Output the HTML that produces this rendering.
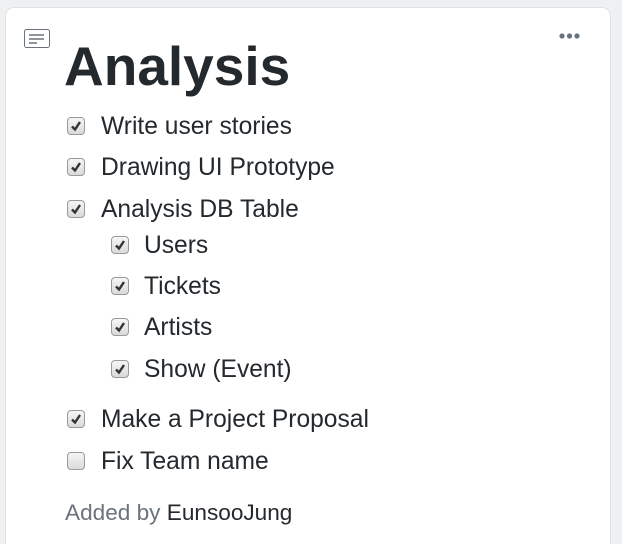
<!DOCTYPE html>
<html><head><style>
html,body{margin:0;width:622px;height:544px;overflow:hidden}
body{background:#eef0f2;font-family:"Liberation Sans",sans-serif;color:#24292e;position:relative}
.card{position:absolute;left:5px;top:7px;width:604px;height:560px;background:#fff;border:1px solid #dfe2e5;border-radius:9px}
.t{position:absolute;font-size:24.6px;white-space:nowrap;line-height:1}
.cb{position:absolute;width:18px;height:18px;border:1px solid #9a9a9a;border-radius:4px;background:linear-gradient(#f6f6f6,#dadada);box-sizing:border-box}
.cb svg{position:absolute;left:2px;top:2px}
</style></head><body>
<div class="card"></div>
<svg style="position:absolute;left:24px;top:29px" width="26" height="19"><rect x="0.5" y="0.5" width="25" height="18" rx="2" fill="#fff" stroke="#6a737d"/><path d="M5 6h15M5 10h15M5 14h8" stroke="#6a737d" stroke-width="1.6"/></svg>
<svg style="position:absolute;left:558px;top:32px" width="24" height="8"><circle cx="4" cy="4" r="2.6" fill="#6a737d"/><circle cx="11.5" cy="4" r="2.6" fill="#6a737d"/><circle cx="19" cy="4" r="2.6" fill="#6a737d"/></svg>
<div class="t" style="left:64px;top:39px;font-size:55px;font-weight:bold">Analysis</div>
<div id="items"></div>
<div class="t" style="left:65px;top:502px;font-size:22.6px;color:#6a737d">Added by <span style="color:#24292e">EunsooJung</span></div>
<script>
var rows=[[67,101,126,'Write user stories',1],[67,101,167,'Drawing UI Prototype',1],[67,101,209,'Analysis DB Table',1],[111,144,245,'Users',1],[111,144,286,'Tickets',1],[111,144,327,'Artists',1],[111,144,369,'Show (Event)',1],[67,101,419,'Make a Project Proposal',1],[67,101,461,'Fix Team name',0]];
var h='';rows.forEach(function(r){h+='<div class="cb" style="left:'+r[0]+'px;top:'+(r[2]-9)+'px">'+(r[4]?'<svg width="12" height="12"><path d="M2 6.5l3 3 5-7.5" fill="none" stroke="#333" stroke-width="2.4"/></svg>':'')+'</div><div class="t" style="left:'+r[1]+'px;top:'+(r[2]-11)+'px">'+r[3]+'</div>';});
document.getElementById('items').innerHTML=h;
</script>
</body></html>
